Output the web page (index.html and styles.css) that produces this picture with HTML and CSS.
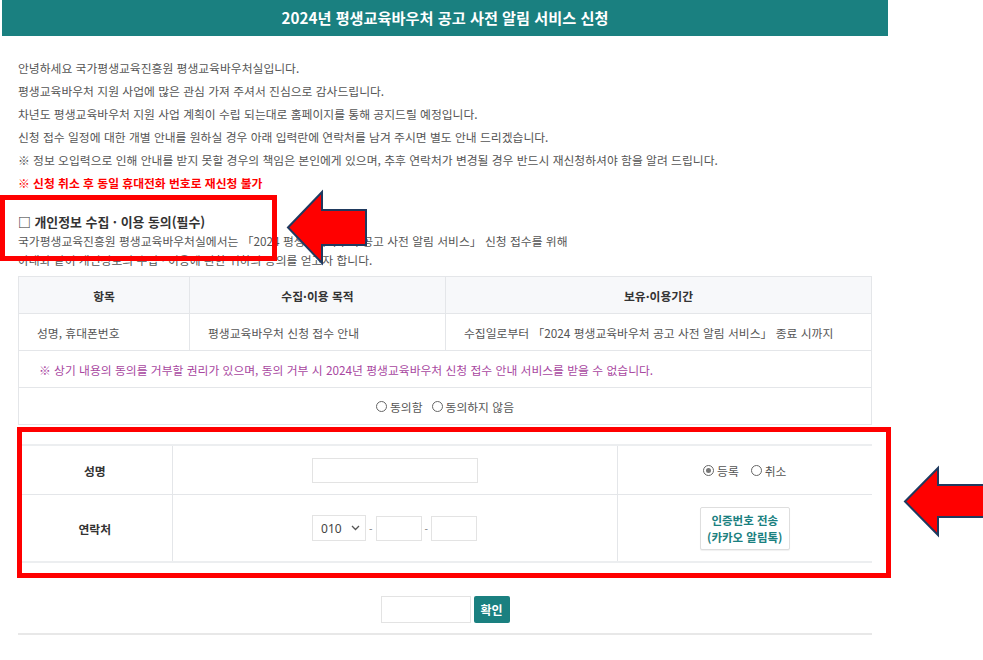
FILE: index.html
```html
<!DOCTYPE html>
<html lang="ko">
<head>
<meta charset="utf-8">
<title>2024년 평생교육바우처 공고 사전 알림 서비스 신청</title>
<link rel="stylesheet" href="styles.css">
</head>
<body>
<div class="page">
  <header class="title-bar">
    <h1>2024년 평생교육바우처 공고 사전 알림 서비스 신청</h1>
  </header>
  <main class="content">
    <div class="intro">
      <p>안녕하세요 국가평생교육진흥원 평생교육바우처실입니다.</p>
      <p>평생교육바우처 지원 사업에 많은 관심 가져 주셔서 진심으로 감사드립니다.</p>
      <p>차년도 평생교육바우처 지원 사업 계획이 수립 되는대로 홈페이지를 통해 공지드릴 예정입니다.</p>
      <p>신청 접수 일정에 대한 개별 안내를 원하실 경우 아래 입력란에 연락처를 남겨 주시면 별도 안내 드리겠습니다.</p>
      <p>※ 정보 오입력으로 인해 안내를 받지 못할 경우의 책임은 본인에게 있으며, 추후 연락처가 변경될 경우 반드시 재신청하셔야 함을 알려 드립니다.</p>
      <p class="warn">※ 신청 취소 후 동일 휴대전화 번호로 재신청 불가</p>
    </div>

    <h2 class="consent-title">□ 개인정보 수집 · 이용 동의(필수)</h2>
    <p class="consent-desc">국가평생교육진흥원 평생교육바우처실에서는 「2024 평생교육바우처 공고 사전 알림 서비스」 신청 접수를 위해<br>아래와 같이 개인정보의 수집 · 이용에 관한 귀하의 동의를 얻고자 합니다.</p>

    <table class="consent-table">
      <colgroup><col class="c1"><col class="c2"><col class="c3"></colgroup>
      <tr>
        <th>항목</th>
        <th>수집·이용 목적</th>
        <th>보유·이용기간</th>
      </tr>
      <tr>
        <td>성명, 휴대폰번호</td>
        <td>평생교육바우처 신청 접수 안내</td>
        <td>수집일로부터 「2024 평생교육바우처 공고 사전 알림 서비스」 종료 시까지</td>
      </tr>
      <tr>
        <td colspan="3" class="notice">※ 상기 내용의 동의를 거부할 권리가 있으며, 동의 거부 시 2024년 평생교육바우처 신청 접수 안내 서비스를 받을 수 없습니다.</td>
      </tr>
      <tr>
        <td colspan="3" class="center">
          <span class="radio-group">
            <span class="radio"><span class="dot"></span>동의함</span>
            <span class="radio"><span class="dot"></span>동의하지 않음</span>
          </span>
        </td>
      </tr>
    </table>

    <table class="form-table">
      <colgroup><col class="f1"><col class="f2"><col class="f3"></colgroup>
      <tr class="row-name">
        <th>성명</th>
        <td><span class="field name-field"></span></td>
        <td>
          <span class="radio-group wide">
            <span class="radio"><span class="dot checked"></span>등록</span>
            <span class="radio"><span class="dot"></span>취소</span>
          </span>
        </td>
      </tr>
      <tr class="row-phone">
        <th>연락처</th>
        <td>
          <span class="phone">
            <span class="field select">010<svg class="chev" width="9" height="6" viewBox="0 0 9 6"><polyline points="1,1 4.5,4.5 8,1" fill="none" stroke="#555" stroke-width="1.3"/></svg></span>
            <span class="dash">-</span>
            <span class="field short"></span>
            <span class="dash">-</span>
            <span class="field short"></span>
          </span>
        </td>
        <td><span class="send-btn">인증번호 전송<br>(카카오 알림톡)</span></td>
      </tr>
    </table>

    <div class="submit-row">
      <span class="field code-field"></span>
      <span class="ok-btn">확인</span>
    </div>
  </main>
</div>

<div class="mark mark-1"></div>
<div class="mark mark-2"></div>
<svg class="arrow arrow-1" width="100" height="90" viewBox="0 0 100 90">
  <polygon points="8,42.5 42,7 42,25 86,25 86,60 42,60 42,78" fill="#ff0000" stroke="#1f3a5f" stroke-width="2" stroke-linejoin="miter"/>
</svg>
<svg class="arrow arrow-2" width="88" height="85" viewBox="0 0 88 85">
  <polygon points="10,41.5 43,8 43,25 95,25 95,57 43,57 43,75" fill="#ff0000" stroke="#1f3a5f" stroke-width="2" stroke-linejoin="miter"/>
</svg>
</body>
</html>
```

FILE: styles.css
```css
html, body {
  margin: 0;
  padding: 0;
  background: #fff;
}

body {
  font-family: "Noto Sans CJK KR", "Noto Sans", sans-serif;
  font-size: 11.8px;
  color: #555;
  overflow: hidden;
}

.page {
  width: 886px;
  margin-left: 2px;
}

.title-bar {
  height: 36px;
  background: #1a8080;
  display: flex;
  align-items: center;
  justify-content: center;
}

.title-bar h1 {
  margin: 0;
  font-size: 15.2px;
  font-weight: 700;
  color: #fff;
  line-height: 1;
}

.content {
  padding: 20px 16px 0;
}

.intro p {
  margin: 0;
  line-height: 23px;
}

.intro .warn {
  color: #ff0000;
  font-weight: 700;
}

.consent-title {
  margin: 18px 0 0;
  font-size: 12.9px;
  font-weight: 700;
  color: #333;
  line-height: 19px;
}

.consent-desc {
  margin: 0;
  line-height: 19px;
}

.consent-table,
.form-table {
  width: 100%;
  border-collapse: collapse;
  table-layout: fixed;
}

.consent-table {
  margin-top: 7px;
  border: 1px solid #e4e6e9;
}

.consent-table .c1 { width: 171px; }
.consent-table .c2 { width: 256px; }
.consent-table .c3 { width: auto; }

.consent-table th,
.consent-table td {
  height: 36px;
  border: 1px solid #e4e6e9;
  padding: 0 18px;
  text-align: left;
  vertical-align: middle;
  white-space: nowrap;
}

.consent-table th {
  background: #f7f8fa;
  font-weight: 700;
  color: #333;
  text-align: center;
}

.consent-table .notice {
  color: #a8479f;
  padding-left: 20px;
}

.consent-table .center {
  text-align: center;
}

.radio-group {
  display: inline-flex;
  align-items: center;
  gap: 9px;
}

.radio-group.wide {
  gap: 12px;
}

.radio {
  display: inline-flex;
  align-items: center;
  gap: 3px;
}

.dot {
  width: 9px;
  height: 9px;
  border: 1px solid #666;
  border-radius: 50%;
  box-sizing: content-box;
  position: relative;
  background: #fff;
}

.dot.checked::after {
  content: "";
  position: absolute;
  left: 2px;
  top: 2px;
  width: 5px;
  height: 5px;
  border-radius: 50%;
  background: #777;
}

.form-table {
  margin-top: 19px;
  border-top: 2px solid #eceef0;
  border-bottom: 2px solid #eceef0;
}

.form-table .f1 { width: 154px; }
.form-table .f2 { width: 445px; }
.form-table .f3 { width: auto; }

.form-table th,
.form-table td {
  border-top: 1px solid #e4e6e9;
  border-bottom: 1px solid #e4e6e9;
  text-align: center;
  vertical-align: middle;
  padding: 0;
}

.form-table th + td,
.form-table td + td {
  border-left: 1px solid #e4e6e9;
}

.form-table th {
  font-weight: 700;
  color: #333;
}

.row-name th,
.row-name td {
  height: 48px;
}

.row-phone th,
.row-phone td {
  height: 66px;
}

.field {
  display: inline-block;
  box-sizing: border-box;
  border: 1px solid #e3e3e3;
  background: #fff;
  vertical-align: middle;
}

.name-field {
  width: 166px;
  height: 25px;
}

.phone {
  display: inline-flex;
  align-items: center;
  gap: 3px;
}

.select {
  width: 54px;
  height: 26px;
  display: inline-flex;
  align-items: center;
  justify-content: space-between;
  padding: 0 5px 0 8px;
  font-family: "Noto Sans", "Noto Sans CJK KR", sans-serif;
  font-size: 12px;
  color: #444;
}

.chev {
  display: block;
}

.dash {
  color: #777;
  font-size: 10px;
}

.short {
  width: 46px;
  height: 25px;
}

.send-btn {
  display: inline-block;
  box-sizing: border-box;
  width: 90px;
  height: 43px;
  padding-top: 4px;
  border: 1px solid #dedede;
  border-radius: 2px;
  box-shadow: 0 1px 1px rgba(0,0,0,0.06);
  color: #1a8080;
  font-weight: 700;
  font-size: 11.5px;
  line-height: 17px;
  background: #fff;
}

.submit-row {
  margin-top: 33px;
  padding-bottom: 10px;
  border-bottom: 2px solid #e8e8e8;
  display: flex;
  justify-content: center;
  gap: 3px;
}

.code-field {
  width: 90px;
  height: 27px;
}

.ok-btn {
  display: inline-flex;
  align-items: center;
  justify-content: center;
  width: 36px;
  height: 27px;
  border-radius: 2px;
  background: #1a8080;
  color: #fff;
  font-weight: 700;
  font-size: 12px;
}

.mark {
  position: absolute;
  box-sizing: border-box;
  border: 5px solid #ff0000;
}

.mark-1 {
  left: 0;
  top: 195px;
  width: 277px;
  height: 66px;
}

.mark-2 {
  left: 17px;
  top: 427px;
  width: 874px;
  height: 151px;
}

.arrow {
  position: absolute;
  display: block;
}

.arrow-1 {
  left: 280px;
  top: 185px;
}

.arrow-2 {
  left: 895px;
  top: 460px;
}
```
